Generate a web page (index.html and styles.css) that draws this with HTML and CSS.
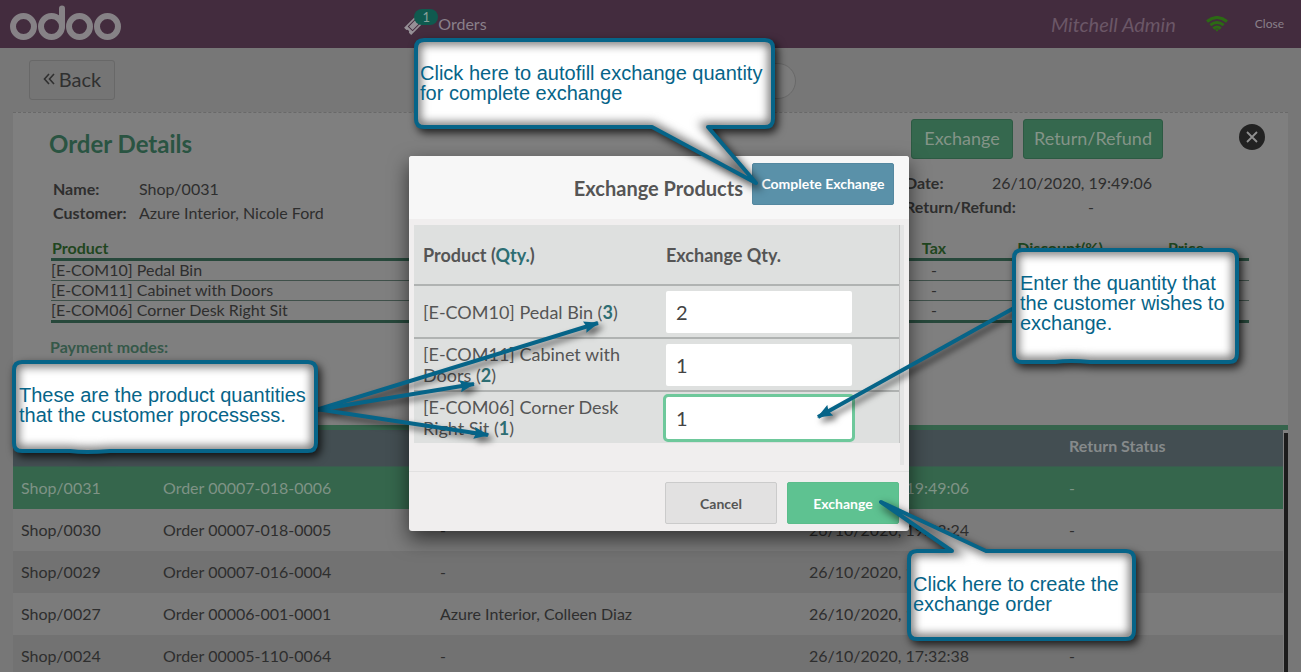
FILE: index.html
```html
<!DOCTYPE html>
<html lang="en">
<head>
<meta charset="utf-8">
<title>Odoo POS - Exchange Products</title>
<link rel="stylesheet" href="styles.css">
</head>
<body>
<div class="pos">
  <header class="topbar">
    <a href="#" class="logo" aria-label="odoo">
      <svg width="112" height="36" viewBox="0 0 112 36" fill="none" stroke="#868286" stroke-width="6" stroke-linecap="round">
        <circle cx="13.500" cy="21.500" r="10.500"/><circle cx="41.500" cy="21.500" r="10.500"/><path d="M52 3.500V21.500"/>
        <circle cx="69.500" cy="21.500" r="10.500"/><circle cx="97.500" cy="21.500" r="10.500"/>
      </svg>
    </a>
    <button class="orders-btn" type="button">
      <span class="ticket">
        <svg width="20" height="20" viewBox="0 0 20 20"><g transform="rotate(-45 10 10)"><path fill="#969096" d="M1 5H19V8.200A1.900 1.900 0 0 0 19 11.800V15H1V11.800A1.900 1.900 0 0 0 1 8.200Z"/><rect x="5" y="7" width="10" height="6" fill="none" stroke="#432c3e"/></g></svg>
        <span class="badge">1</span>
      </span>
      Orders
    </button>
    <div class="top-right">
      <span class="username">Mitchell Admin</span>
      <svg class="wifi" width="22" height="16" viewBox="0 0 22 16" fill="none" stroke="#2c6a14" stroke-width="3"><path d="M1 5.500Q11-2.500 21 5.500"/><path d="M4.300 9.200Q11 3.700 17.700 9.200"/><path d="M7.300 12.600Q11 9.500 14.700 12.600"/><path d="M9 13.200H13L11 15.800Z" fill="#2c6a14" stroke="none"/></svg>
      <button class="close-btn" type="button">Close</button>
    </div>
  </header>

  <div class="toolbar">
    <button class="back" type="button"><svg width="12" height="14" viewBox="0 0 12 14" fill="none" stroke="#303030" stroke-width="1.600"><path d="M6 2L1.500 7L6 12M11 2L6.500 7L11 12"/></svg>Back</button>
    <input class="search" type="search" aria-label="Search Order">
  </div>

  <main class="panel">
    <section class="details">
      <div class="summary">
        <div class="summary-left">
          <h1>Order Details</h1>
          <dl class="fields">
            <dt>Name:</dt><dd>Shop/0031</dd>
            <dt>Customer:</dt><dd>Azure Interior, Nicole Ford</dd>
          </dl>
        </div>
        <div class="summary-right">
          <div class="actions">
            <button class="green" type="button">Exchange</button>
            <button class="green wide" type="button">Return/Refund</button>
            <button class="dismiss" type="button" aria-label="Close details"><svg width="12" height="12" viewBox="0 0 12 12" stroke="#909090" stroke-width="1.800"><path d="M1 1L11 11M11 1L1 11"/></svg></button>
          </div>
          <dl class="fields right">
            <dt>Date:</dt><dd>26/10/2020, 19:49:06</dd>
            <dt>Return/Refund:</dt><dd class="dash">-</dd>
          </dl>
        </div>
      </div>
      <table class="lines">
        <thead><tr><th>Product</th><th class="num">Tax</th><th class="num">Discount(%)</th><th class="num">Price</th></tr></thead>
        <tbody>
          <tr><td>[E-COM10] Pedal Bin</td><td class="num">-</td><td class="num"></td><td class="num"></td></tr>
          <tr><td>[E-COM11] Cabinet with Doors</td><td class="num">-</td><td class="num"></td><td class="num"></td></tr>
          <tr><td>[E-COM06] Corner Desk Right Sit</td><td class="num">-</td><td class="num"></td><td class="num"></td></tr>
        </tbody>
      </table>
      <h2>Payment modes:</h2>
    </section>
    <section class="list">
      <table class="orders">
        <thead><tr><th class="c-ref"></th><th class="c-receipt"></th><th class="c-customer"></th><th class="c-date"></th><th>Return Status</th></tr></thead>
        <tbody>
          <tr class="selected"><td>Shop/0031</td><td>Order 00007-018-0006</td><td></td><td>26/10/2020, 19:49:06</td><td>-</td></tr>
          <tr><td>Shop/0030</td><td>Order 00007-018-0005</td><td>-</td><td>26/10/2020, 19:43:24</td><td>-</td></tr>
          <tr class="shade"><td>Shop/0029</td><td>Order 00007-016-0004</td><td>-</td><td>26/10/2020, 17:58:12</td><td>-</td></tr>
          <tr><td>Shop/0027</td><td>Order 00006-001-0001</td><td>Azure Interior, Colleen Diaz</td><td>26/10/2020, 17:45:10</td><td>-</td></tr>
          <tr class="shade"><td>Shop/0024</td><td>Order 00005-110-0064</td><td>-</td><td>26/10/2020, 17:32:38</td><td>-</td></tr>
        </tbody>
      </table>
      <div class="scroll"></div>
    </section>
  </main>
</div>

<div class="overlay">
  <form class="modal" role="dialog" aria-labelledby="modal-title">
    <header class="modal-head">
      <h2 id="modal-title">Exchange Products</h2>
      <button class="complete" type="button">Complete Exchange</button>
    </header>
    <div class="modal-body">
      <table class="exchange">
        <thead><tr><th class="c-product">Product (<span class="teal">Qty.</span>)</th><th>Exchange Qty.</th></tr></thead>
        <tbody>
          <tr><td><label for="q1">[E-COM10] Pedal Bin (<b>3</b>)</label></td><td><input id="q1" type="text" value="2"></td></tr>
          <tr><td><label for="q2">[E-COM11] Cabinet with Doors (<b>2</b>)</label></td><td><input id="q2" type="text" value="1"></td></tr>
          <tr><td><label for="q3">[E-COM06] Corner Desk Right Sit (<b>1</b>)</label></td><td><input id="q3" class="active" type="text" value="1"></td></tr>
        </tbody>
      </table>
    </div>
    <footer class="modal-foot">
      <button class="cancel" type="button">Cancel</button>
      <button class="confirm" type="button">Exchange</button>
    </footer>
  </form>
</div>

<div class="notes">
  <svg class="shapes" width="1301" height="672" viewBox="0 0 1301 672">
    <defs>
      <path id="n1" d="M424 40H765Q773 40 773 48V119Q773 127 765 127H708L756 183L652 127H424Q416 127 416 119V48Q416 40 424 40Z"/>
      <path id="n2" d="M22 362H308Q316 362 316 370V443Q316 451 308 451H110Q85 453 70 451H22Q14 451 14 443V370Q14 362 22 362Z"/>
      <path id="n3" d="M1022 250H1229Q1237 250 1237 258V354Q1237 362 1229 362H1090Q1070 360 1055 362H1022Q1014 362 1014 354V258Q1014 250 1022 250Z"/>
      <path id="n4" d="M917 551H952L881 502L986 551H1126Q1134 551 1134 559V631Q1134 639 1126 639H917Q909 639 909 631V559Q909 551 917 551Z"/>
      <clipPath id="k1"><use href="#n1"/></clipPath>
      <clipPath id="k2"><use href="#n2"/></clipPath>
      <clipPath id="k3"><use href="#n3"/></clipPath>
      <clipPath id="k4"><use href="#n4"/></clipPath>
      <marker id="head" markerUnits="userSpaceOnUse" markerWidth="16" markerHeight="12" refX="14" refY="6" orient="auto"><path d="M0 0L15 6L0 12L2 6Z" fill="#066488"/></marker>
    </defs>
    <g class="arrows">
      <path d="M316 410L598 323"/><path d="M316 410L474 384"/><path d="M316 409L488 435"/><path d="M1014 308L818 417"/>
    </g>
    <g class="bubble"><use href="#n1" class="fill"/><g clip-path="url(#k1)"><use href="#n1" class="inner"/></g><use href="#n1" class="edge"/></g>
    <g class="bubble"><use href="#n2" class="fill"/><g clip-path="url(#k2)"><use href="#n2" class="inner"/></g><use href="#n2" class="edge"/></g>
    <g class="bubble"><use href="#n3" class="fill"/><g clip-path="url(#k3)"><use href="#n3" class="inner"/></g><use href="#n3" class="edge"/></g>
    <g class="bubble"><use href="#n4" class="fill"/><g clip-path="url(#k4)"><use href="#n4" class="inner"/></g><use href="#n4" class="edge"/></g>
  </svg>
  <p class="note note-autofill">Click here to autofill exchange quantity<br>for complete exchange</p>
  <p class="note note-products">These are the product quantities<br>that the customer processess.</p>
  <p class="note note-quantity">Enter the quantity that<br>the customer wishes to<br>exchange.</p>
  <p class="note note-create">Click here to create the<br>exchange order</p>
</div>
</body>
</html>
```
FILE: styles.css
```css
* { box-sizing: border-box; }
body {
  margin: 0;
  background: #777;
  color: #2e2e2e;
  font: 16px/20px Lato, sans-serif;
  overflow: hidden;
}
button, input { font-family: inherit; }
h1, h2, p, dl, dd { margin: 0; }
table { width: 100%; border-spacing: 0; table-layout: fixed; }
th { text-align: left; }

.pos { height: 100vh; display: flex; flex-direction: column; }

.topbar {
  flex: none;
  height: 48px;
  display: grid;
  grid-template-columns: 31% 1fr auto;
  align-items: center;
  background: #432c3e;
}
.logo { padding-left: 10px; height: 38px; }
.orders-btn {
  justify-self: start;
  display: flex;
  align-items: center;
  gap: 13px;
  padding: 0;
  border: 0;
  background: none;
  color: #8a808a;
  font-size: 16px;
  line-height: 20px;
}
.ticket { position: relative; height: 18px; width: 22px; }
.badge {
  position: absolute;
  left: 11px;
  top: -6px;
  width: 24px;
  height: 16px;
  border-radius: 8px;
  background: #0f5a4f;
  color: #89a09b;
  font-size: 13px;
  line-height: 16px;
  text-align: center;
}
.top-right { display: flex; align-items: center; padding-right: 17px; }
.username { color: #6b5767; font-size: 20px; line-height: 24px; font-style: italic; }
.wifi { margin: 0 27px 0 30px; }
.close-btn { padding: 0; border: 0; background: none; color: #8a808a; font-size: 12px; line-height: 20px; }

.toolbar {
  flex: none;
  height: 64px;
  display: flex;
  align-items: flex-start;
  padding: 12px 29px 0;
}
.back {
  display: flex;
  align-items: center;
  justify-content: center;
  gap: 4px;
  width: 86px;
  height: 40px;
  padding: 0 0 2px;
  border: 1px solid #686868;
  border-radius: 3px;
  background: #757575;
  color: #303030;
  font-size: 20px;
}
.search {
  width: 290px;
  height: 36px;
  margin: 3px 0 0 391px;
  border: 1px solid #696969;
  border-radius: 18px;
  background: #7c7c7c;
}

.panel {
  flex: 1;
  min-height: 0;
  display: flex;
  flex-direction: column;
  margin: 0 13px;
  border-top: 1px dashed #696969;
  background: #7f7f7f;
}
.details { flex: none; height: 312px; padding: 6px 39px 0 38px; }
.summary { display: grid; grid-template-columns: 1fr 344px; }
.summary-left { padding-top: 11px; }
h1 { color: #2a5442; font-size: 24px; line-height: 28px; margin-left: -2px; }
.fields {
  display: grid;
  grid-template-columns: 86px 1fr;
  margin: 19px 0 0 2px;
  line-height: 24px;
}
.fields dt { font-weight: 700; }
.fields.right { grid-template-columns: 87px 96px 1fr; margin: 12px 0 0; }
.fields.right dt { grid-column: 1; white-space: nowrap; }
.fields.right dd { grid-column: 2 / -1; }
.fields.right .dash { grid-column: 3; }
.actions { display: flex; align-items: center; gap: 10px; padding-left: 6px; margin-right: -16px; }
.green {
  width: 102px;
  height: 40px;
  padding: 0 0 2px;
  border: 1px solid #2d5a43;
  border-radius: 3px;
  background: #35684e;
  color: #849488;
  font-size: 18px;
}
.green.wide { width: 140px; }
.dismiss {
  display: grid;
  place-items: center;
  width: 26px;
  height: 26px;
  margin: 0 0 4px auto;
  padding: 0;
  border: 0;
  border-radius: 50%;
  background: #222;
}
.lines { margin-top: 11px; }
.lines th { height: 25px; padding: 2px 1px 0; color: #1f4620; border-bottom: 3px solid #27483b; }
.lines td { height: 20px; padding: 0 0 2px; line-height: 17px; border-bottom: 1px solid #3f504a; }
.lines tr:last-child td { border-bottom: 3px solid #27483b; }
.lines .num { width: 126px; text-align: center; }
.details h2 { margin: 14px 0 0 -1px; color: #355849; font-size: 16px; line-height: 20px; }

.list { flex: 1; min-height: 0; display: flex; border-top: 5px solid #35644c; overflow: hidden; }
.orders { flex: 1; align-self: flex-start; }
.orders th { height: 37px; padding: 0 8px 4px; background: #434e52; color: #868a8b; border-bottom: 1px solid #3b5b4f; }
.orders td { height: 42px; padding: 0 8px; background: #7b7b7b; }
.orders .shade td { background: #727272; }
.orders .selected td { background: #35664c; color: #7f9386; }
.c-ref { width: 142px; }
.c-receipt { width: 277px; }
.c-customer { width: 369px; }
.c-date { width: 260px; }
.scroll { flex: none; width: 4px; margin: 3px 0 0 1px; background: #1c1c1c; }

.overlay {
  position: absolute;
  inset: 0;
  display: grid;
  place-items: center;
  padding: 15px 0 0 17px;
}
.modal {
  width: 500px;
  border-radius: 3px;
  background: #f0eeee;
  color: #555;
  box-shadow: 0 8px 20px rgba(0, 0, 0, 0.6);
}
.modal-head {
  display: flex;
  align-items: center;
  justify-content: flex-end;
  gap: 9px;
  height: 63px;
  padding: 0 15px 8px 0;
  border-radius: 3px 3px 0 0;
  background: #f7f7f7;
}
.modal-head h2 { font-size: 20px; line-height: 24px; padding-top: 9px; }
.complete, .cancel, .confirm { height: 42px; padding: 0; border-radius: 2px; font-size: 14px; font-weight: 700; }
.complete { width: 142px; border: 1px solid #5488a0; background: #5a91a9; color: #fff; }
.modal-body { height: 240px; margin: 6px 5px; border-right: 4px solid #e4e4e4; }
.exchange { border-right: 1px solid #c4c4c4; }
.exchange th, .exchange td { padding: 1px 9px 0; background: #dee0df; font-size: 18px; line-height: 21px; border-bottom: 2px solid #b0b3b2; }
.exchange th { height: 61px; }
.exchange td { height: 53px; }
.exchange tbody tr:last-child td { height: 51px; border: 0; }
.c-product { width: 243px; }
.teal, .exchange b { color: #2d6e73; }
.exchange label { display: block; }
.exchange input {
  display: block;
  width: 186px;
  height: 42px;
  padding: 0 10px;
  border: 0;
  border-radius: 2px;
  background: #fff;
  color: #444;
  font-size: 20px;
}
.exchange .active { outline: 3px solid #6ec89b; }
.modal-foot {
  display: flex;
  justify-content: flex-end;
  gap: 10px;
  padding: 10px 10px 7px;
  border-top: 1px solid #e2e1e1;
}
.cancel { width: 112px; border: 1px solid #cbcbcb; background: #e2e1e1; color: #555; }
.confirm { width: 112px; border: 1px solid #5bbd8b; background: #5ec291; color: #fff; }

.notes { position: absolute; inset: 0; overflow: hidden; pointer-events: none; }
.shapes { display: block; }
.bubble { filter: drop-shadow(3px 4px 4px rgba(0, 0, 0, 0.75)); }
.fill { fill: #fff; }
.inner { fill: none; stroke: #666; stroke-width: 9px; filter: blur(5px); }
.edge { fill: none; stroke: #066488; stroke-width: 4px; stroke-linejoin: round; }
.arrows { fill: none; stroke: #066488; stroke-width: 4px; filter: drop-shadow(4px 4px 3px rgba(0, 0, 0, 0.6)); }
.arrows path { marker-end: url(#head); }
.note {
  position: absolute;
  color: #066488;
  font: 20px/20px "Liberation Sans", Arial, sans-serif;
  white-space: nowrap;
}
.note-autofill { left: 420px; top: 63px; }
.note-products { left: 19px; top: 385px; }
.note-quantity { left: 1020px; top: 273px; }
.note-create { left: 913px; top: 574px; }
```
